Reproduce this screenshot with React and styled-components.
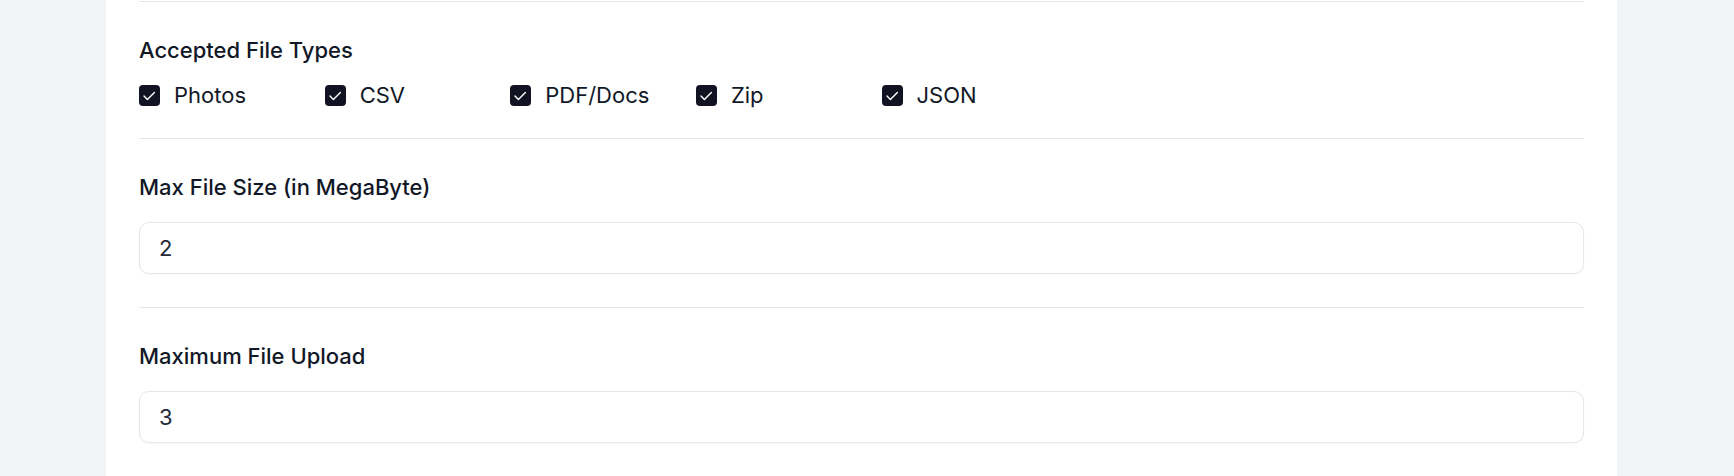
import React from 'react';
import styled, { createGlobalStyle } from 'styled-components';

const GlobalStyle = createGlobalStyle`
  html, body {
    margin: 0;
    padding: 0;
    background: #f3f4f6;
    font-family: Inter, "Noto Sans", sans-serif;
    color: #111827;
  }
`;

const FILE_TYPES = ['Photos', 'CSV', 'PDF/Docs', 'Zip', 'JSON'];

const CheckIcon = () => (
  <svg width="21" height="21" viewBox="0 0 21 21" fill="none">
    <path
      d="M5 11l3.4 3.6L15.4 7.4"
      stroke="#fff"
      strokeWidth="1.4"
      strokeLinecap="round"
      strokeLinejoin="round"
    />
  </svg>
);

const FileTypeOption = ({ label, checked }) => (
  <Option>
    <Box $checked={checked}>{checked && <CheckIcon />}</Box>
    <OptionLabel>{label}</OptionLabel>
  </Option>
);

const NumberField = ({ label, value }) => (
  <Section>
    <FieldLabel>{label}</FieldLabel>
    <Input type="text" defaultValue={value} readOnly />
  </Section>
);

const App = () => (
  <Page>
    <GlobalStyle />
    <Panel>
      <Section>
        <FieldLabel>Accepted File Types</FieldLabel>
        <OptionGrid>
          {FILE_TYPES.map((type) => (
            <FileTypeOption key={type} label={type} checked />
          ))}
        </OptionGrid>
      </Section>
      <NumberField label="Max File Size (in MegaByte)" value="2" />
      <NumberField label="Maximum File Upload" value="3" />
    </Panel>
  </Page>
);

const Page = styled.div`
  min-height: 476px;
  padding-left: 106px;
  display: flex;
  align-items: stretch;
`;

const Panel = styled.div`
  width: 1511px;
  background: #ffffff;
  padding: 1px 33px 0;
  box-sizing: border-box;
  display: flex;
  flex-direction: column;
`;

const Section = styled.div`
  border-top: 1px solid #e5e7eb;
  padding: 33px 0;
  display: flex;
  flex-direction: column;
  gap: 20px;
`;

const FieldLabel = styled.div`
  font-size: 22px;
  line-height: 30px;
  font-weight: 500;
  color: #111827;
`;

const OptionGrid = styled.div`
  display: grid;
  grid-template-columns: repeat(8, 1fr);
  column-gap: 40px;
  margin: -5px 0 -5px;
`;

const Option = styled.label`
  display: flex;
  align-items: center;
  gap: 14px;
  height: 30px;
`;

const Box = styled.span`
  width: 21px;
  height: 21px;
  flex: none;
  border-radius: 4px;
  background: ${({ $checked }) => ($checked ? '#111322' : '#fff')};
  border: ${({ $checked }) => ($checked ? 'none' : '1px solid #d1d5db')};
  display: flex;
  align-items: center;
  justify-content: center;
`;

const OptionLabel = styled.span`
  font-size: 22px;
  line-height: 30px;
  color: #111827;
`;

const Input = styled.input`
  height: 52px;
  box-sizing: border-box;
  width: 100%;
  border: 1px solid #e5e7eb;
  border-radius: 10px;
  padding: 0 19px;
  font-family: Inter, "Noto Sans", sans-serif;
  font-size: 22px;
  color: #1f2937;
  background: #fff;
  box-shadow: 0 1px 2px rgba(0, 0, 0, 0.03);
  outline: none;
`;

export default App;
